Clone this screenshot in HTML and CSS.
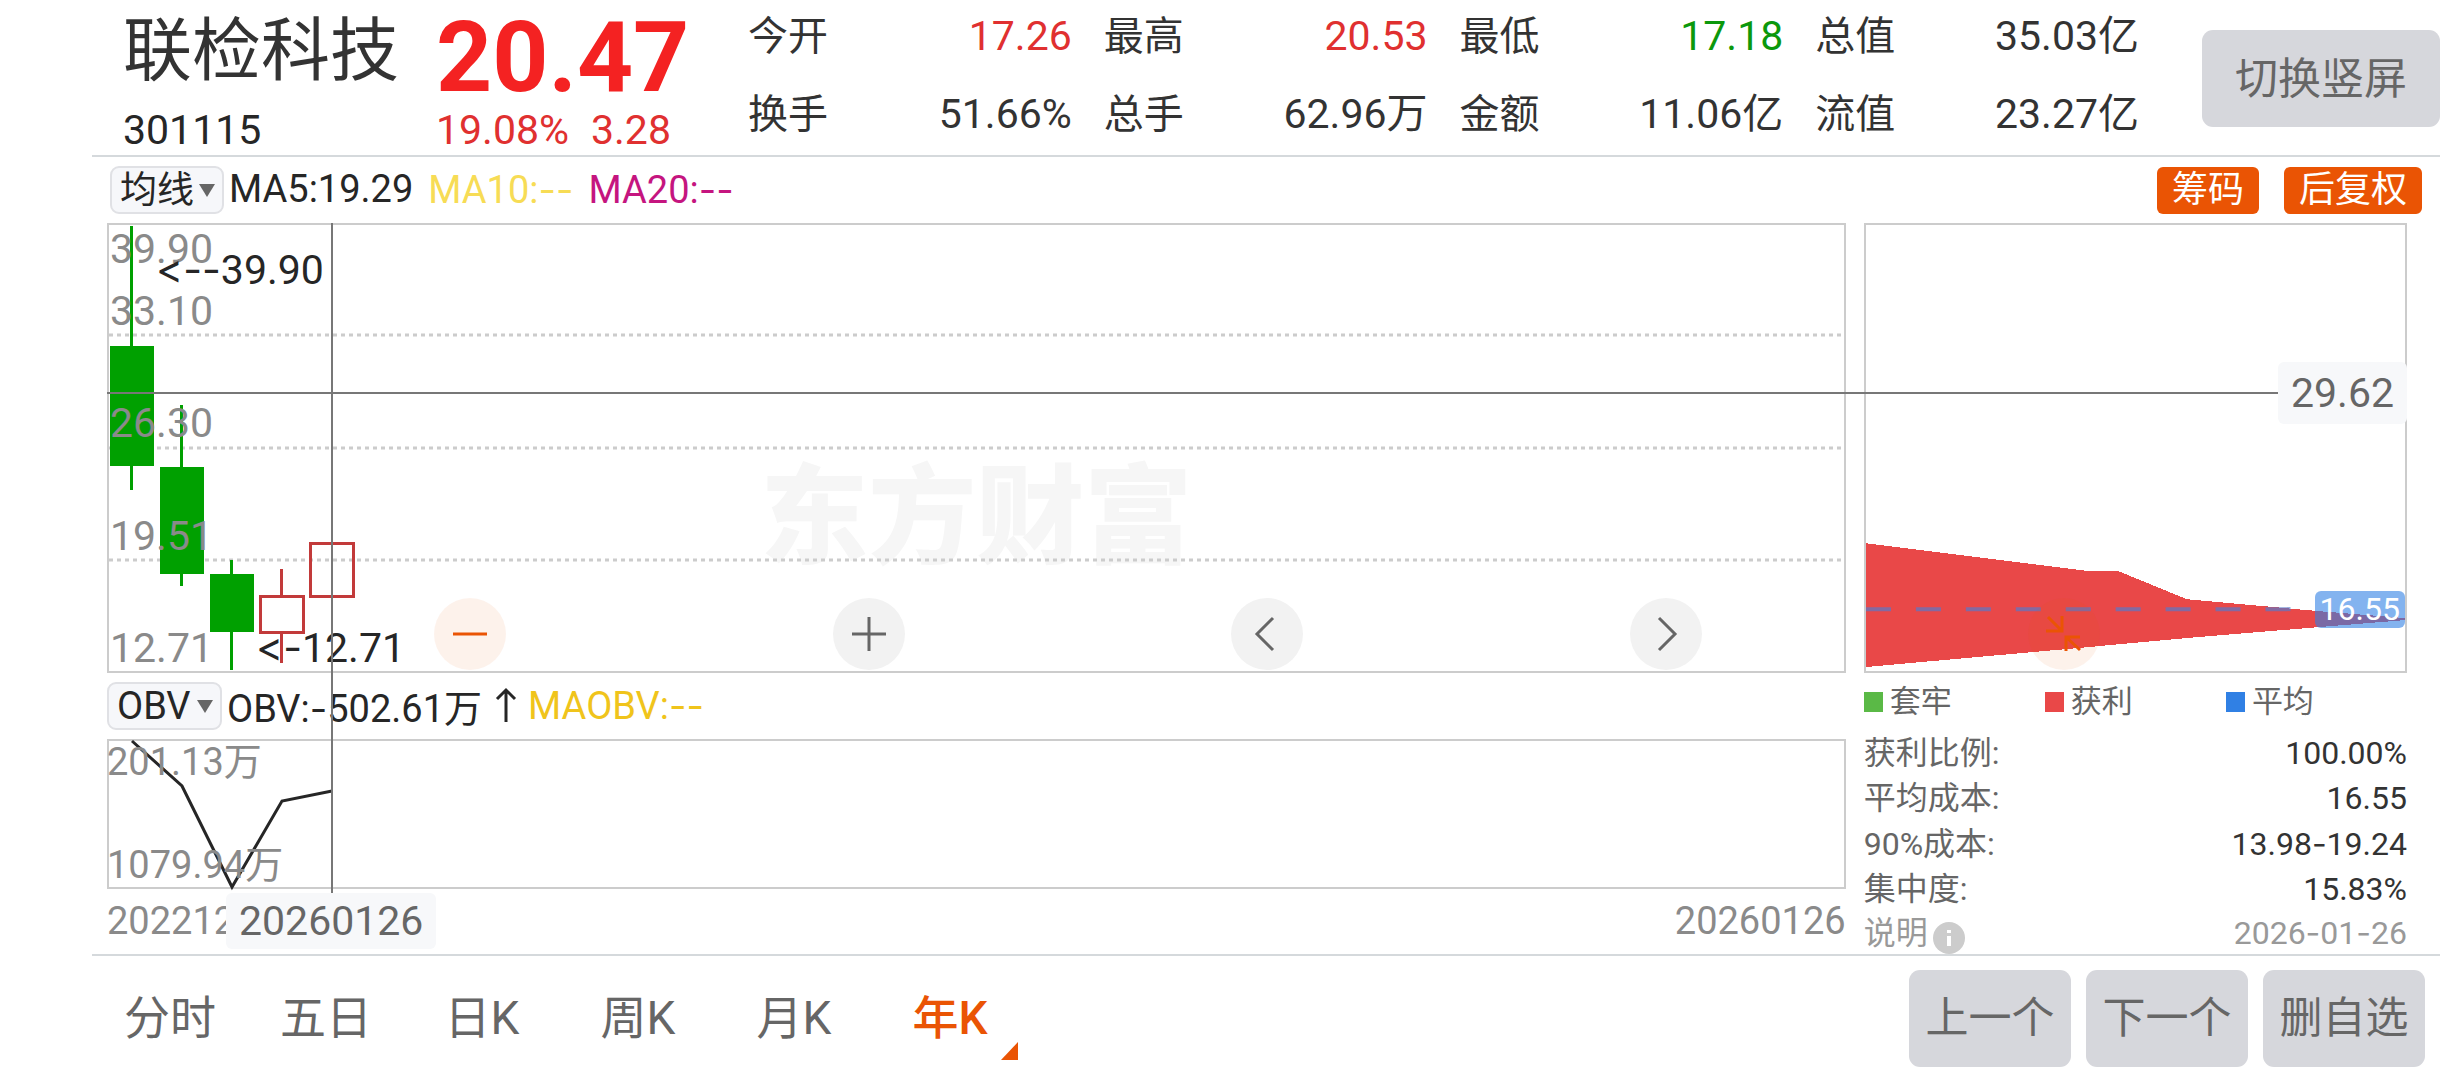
FILE: index.html
```html
<!DOCTYPE html>
<html lang="zh-CN">
<head>
  <meta charset="UTF-8">
  <title>联检科技 301115</title>
  <link rel="stylesheet" href="styles.css">
</head>
<body>
  <header class="quote">
    <div class="stock">
      <h1>联检科技</h1>
      <span class="code">301115</span>
    </div>
    <div class="price">
      <strong>20.47</strong>
      <div class="change"><span>19.08%</span><span>3.28</span></div>
    </div>
    <dl class="stats">
      <div><dt>今开</dt><dd class="up">17.26</dd></div>
      <div><dt>最高</dt><dd class="up">20.53</dd></div>
      <div><dt>最低</dt><dd class="down">17.18</dd></div>
      <div><dt>总值</dt><dd>35.03亿</dd></div>
      <div><dt>换手</dt><dd>51.66%</dd></div>
      <div><dt>总手</dt><dd>62.96万</dd></div>
      <div><dt>金额</dt><dd>11.06亿</dd></div>
      <div><dt>流值</dt><dd>23.27亿</dd></div>
    </dl>
    <button class="gray-btn rotate-btn">切换竖屏</button>
  </header>

  <div class="toolbar">
    <div class="picker">
      <select aria-label="主图指标"><option>均线</option></select>
    </div>
    <div class="values">
      <span>MA5:19.29</span>
      <span class="ma10">MA10:<i>--</i></span>
      <span class="ma20">MA20:<i>--</i></span>
    </div>
    <button class="tag-btn">筹码</button>
    <button class="tag-btn">后复权</button>
  </div>

  <main class="charts">
    <section class="left">
      <div class="box kline">
        <svg width="100%" height="100%">
          <text class="watermark" x="50%" y="330">东方财富</text>
          <g class="grid">
            <line x1="0" y1="110" x2="100%" y2="110"/>
            <line x1="0" y1="223" x2="100%" y2="223"/>
            <line x1="0" y1="335" x2="100%" y2="335"/>
          </g>
          <g class="fall">
            <rect x="21" y="1" width="3" height="264"/>
            <rect x="1" y="121" width="44" height="120"/>
            <rect x="71" y="180" width="3" height="181"/>
            <rect x="51" y="242" width="44" height="107"/>
            <rect x="121" y="335" width="3" height="110"/>
            <rect x="101" y="349" width="44" height="58"/>
          </g>
          <g class="rise">
            <path d="M172.500 344V371M172.500 408V438"/>
            <rect x="151.500" y="371.500" width="43" height="36"/>
            <rect x="201.500" y="318.500" width="43" height="53"/>
          </g>
          <g class="axis">
            <text x="1" y="38">39.90</text>
            <text x="1" y="100">33.10</text>
            <text x="1" y="212">26.30</text>
            <text x="1" y="325">19.51</text>
            <text x="1" y="437">12.71</text>
          </g>
          <text class="mark" x="47" y="59"><tspan class="dash">&lt;--</tspan>39.90</text>
          <text class="mark" x="147" y="437"><tspan class="dash">&lt;-</tspan>12.71</text>
        </svg>
      </div>
      <div class="toolbar obv-bar">
        <div class="picker">
          <select aria-label="副图指标"><option>OBV</option></select>
        </div>
        <div class="values">
          <span>OBV:<i>-</i>502.61万</span>
          <svg class="arrow" width="46" height="38" viewBox="0 0 46 38"><path d="M24 36V4M15 13L24 4L33 13"/></svg>
          <span class="maobv">MAOBV:<i>--</i></span>
        </div>
      </div>
      <div class="box obv">
        <svg width="100%" height="100%">
          <polyline points="23,0 73,45 123,146 173,60 223,50"/>
          <g class="axis small">
            <text x="-2" y="34">201.13万</text>
            <text x="-2" y="137">1079.94万</text>
          </g>
        </svg>
      </div>
      <div class="dates"><span>20221230</span><span>20260126</span></div>
      <div class="cross-v"></div>
      <div class="cross-date">20260126</div>
    </section>

    <section class="right">
      <div class="box chips">
        <svg width="100%" height="100%" viewBox="0 0 540 447" preserveAspectRatio="none">
          <polygon points="0,319 224,347 253,347 321,375 453,387 540,394 540,396 453,403 321,414 212,424 67,437 0,443"/>
          <line x1="0" y1="385" x2="440" y2="385"/>
        </svg>
        <span class="avg">16.55</span>
      </div>
      <ul class="legend">
        <li class="green">套牢</li>
        <li class="red">获利</li>
        <li class="blue">平均</li>
      </ul>
      <table class="cost">
        <tr><th>获利比例:</th><td>100.00%</td></tr>
        <tr><th>平均成本:</th><td>16.55</td></tr>
        <tr><th>90%成本:</th><td>13.98<i>-</i>19.24</td></tr>
        <tr><th>集中度:</th><td>15.83%</td></tr>
        <tr class="note">
          <th>说明<svg width="32" height="32" viewBox="0 0 32 32"><circle cx="16" cy="16" r="16"/><path d="M16 14V24M16 8V11"/></svg></th>
          <td>2026<i>-</i>01<i>-</i>26</td>
        </tr>
      </table>
    </section>

    <div class="cross-h"></div>
    <div class="cross-price">29.62</div>

    <div class="controls">
      <button class="orange" aria-label="缩小"><svg viewBox="0 0 72 72"><path d="M19 36H53"/></svg></button>
      <button aria-label="放大"><svg viewBox="0 0 72 72"><path d="M19 36H53M36 19V53"/></svg></button>
      <button aria-label="左移"><svg viewBox="0 0 72 72"><path d="M42 20L26 36L42 52"/></svg></button>
      <button aria-label="右移"><svg viewBox="0 0 72 72"><path d="M29 20L45 36L29 52"/></svg></button>
      <button class="orange" aria-label="收起"><svg viewBox="0 0 72 72"><path d="M34 18V33H18M20 19L34 33M52 39H38V53M38 39L52 52"/></svg></button>
    </div>
  </main>

  <footer class="bottom">
    <nav class="tabs">
      <button>分时</button>
      <button>五日</button>
      <button>日K</button>
      <button>周K</button>
      <button>月K</button>
      <button class="active">年K</button>
    </nav>
    <button class="gray-btn">上一个</button>
    <button class="gray-btn">下一个</button>
    <button class="gray-btn">删自选</button>
  </footer>
</body>
</html>
```

FILE: styles.css
```css
* {
  box-sizing: border-box;
}

body {
  margin: 0;
  padding-left: 92px;
  background: #fff;
  color: #333;
  font-family: Roboto, "Noto Sans CJK SC", sans-serif;
  font-size: 41px;
}

button, select {
  margin: 0;
  padding: 0;
  border: 0;
  font-family: inherit;
  color: inherit;
  cursor: pointer;
}

h1, dl, dd, ul {
  margin: 0;
  padding: 0;
}

svg {
  display: block;
}

/* wide hyphens, no arrow ligatures */
i, .dash {
  font-family: Inter, sans-serif;
  font-style: normal;
  font-variant-ligatures: none;
  font-feature-settings: "calt" 0;
}

/* header */
.quote {
  display: flex;
  height: 157px;
  border-bottom: 2px solid #d5d9dc;
}

.stock {
  width: 344px;
  padding: 10px 0 0 31px;
}

.stock h1 {
  font-size: 69px;
  font-weight: 400;
  line-height: 84px;
}

.code {
  display: block;
  color: #262626;
  line-height: 72px;
}

.price {
  width: 312px;
}

.price strong {
  display: block;
  padding-top: 8px;
  color: #f42222;
  font-size: 98px;
  line-height: 100px;
}

.change {
  display: flex;
  gap: 22px;
  color: #e03030;
  line-height: 44px;
}

.stats {
  flex: 1;
  display: grid;
  grid-template-columns: repeat(4, 1fr);
  column-gap: 32px;
  align-content: start;
}

.stats div {
  display: flex;
  justify-content: space-between;
  height: 78px;
  line-height: 73px;
}

.stats dt {
  font-size: 40px;
}

.up {
  color: #e03030;
}

.down {
  color: #0c980c;
}

.gray-btn {
  height: 97px;
  width: 162px;
  padding-bottom: 8px;
  border-radius: 11px;
  background: #d6d7dc;
  color: #666;
  font-size: 43px;
}

.rotate-btn {
  width: 238px;
  margin: 30px 0 0 63px;
}

/* indicator bars */
.toolbar {
  display: flex;
  align-items: center;
  height: 66px;
  padding: 0 18px;
  font-size: 38px;
}

.picker {
  position: relative;
  width: 114px;
}

.picker select {
  width: 100%;
  height: 48px;
  padding-left: 8px;
  border: 2px solid #e0e1e5;
  border-radius: 9px;
  background: #f6f7fa;
  color: #262626;
  font-size: 37px;
  appearance: none;
}

.picker::after {
  content: "";
  position: absolute;
  right: 9px;
  top: 18px;
  border: 8px solid transparent;
  border-top: 13px solid #666;
  border-bottom: 0;
  pointer-events: none;
}

.values {
  flex: 1;
  display: flex;
  align-items: center;
  gap: 15px;
  padding: 0 0 2px 5px;
  color: #262626;
  white-space: nowrap;
}

.ma10 {
  color: #f7dc55;
}

.ma20 {
  color: #c5157f;
}

.maobv {
  color: #f0c41b;
}

.tag-btn {
  height: 47px;
  margin-left: 25px;
  padding: 0 15px;
  border-radius: 6px;
  background: #ea5404;
  color: #fff;
  font-size: 36px;
  line-height: 47px;
}

/* charts */
.charts {
  position: relative;
  display: grid;
  grid-template-columns: 16fr 5fr;
  column-gap: 18px;
  padding: 0 33px 0 15px;
}

.left {
  position: relative;
}

.box {
  border: 2px solid #ccc;
}

.kline, .chips {
  height: 450px;
}

.grid line {
  stroke: #ccc;
  stroke-width: 3;
  stroke-dasharray: 4 4;
}

.watermark {
  fill: #f6f6f6;
  font-size: 108px;
  font-weight: 900;
  text-anchor: middle;
}

.fall {
  fill: #00a000;
}

.rise {
  fill: none;
  stroke: #c23a3a;
  stroke-width: 3;
}

.axis {
  fill: #8a8a8a;
}

.axis.small {
  font-size: 38px;
}

.mark {
  fill: #262626;
}

.obv-bar {
  height: 66px;
  padding: 0;
}

.obv-bar .picker {
  width: 115px;
}

.obv-bar select {
  font-size: 38px;
}

.obv-bar .values {
  gap: 0;
}

.arrow {
  fill: none;
  stroke: #262626;
  stroke-width: 3;
}

.obv {
  height: 150px;
}

.obv svg {
  overflow: visible;
}

.obv polyline {
  fill: none;
  stroke: #262626;
  stroke-width: 3;
}

.dates {
  display: flex;
  justify-content: space-between;
  color: #8a8a8a;
  font-size: 38px;
  line-height: 64px;
}

.cross-v {
  position: absolute;
  left: 224px;
  top: 0;
  width: 2px;
  height: 670px;
  background: #777;
}

.cross-h {
  position: absolute;
  left: 15px;
  right: 162px;
  top: 169px;
  height: 2px;
  background: #777;
}

.cross-date, .cross-price {
  position: absolute;
  border-radius: 6px;
  background: #f7f8fa;
  color: #666;
}

.cross-date {
  left: 119px;
  top: 670px;
  padding: 0 13px;
  line-height: 56px;
}

.cross-price {
  right: 33px;
  top: 139px;
  padding: 0 13px;
  line-height: 62px;
}

/* zoom and pan buttons over the charts */
.controls {
  position: absolute;
  left: 342px;
  right: 340px;
  top: 375px;
  display: flex;
  justify-content: space-between;
}

.controls button {
  width: 72px;
  height: 72px;
  border-radius: 50%;
  background: #f2f2f2;
  color: #666;
}

.controls .orange {
  background: rgba(234, 84, 4, 0.08);
  color: #ea5404;
}

.controls path {
  fill: none;
  stroke: currentColor;
  stroke-width: 3;
}

/* cost distribution */
.chips {
  position: relative;
}

.chips polygon {
  fill: #e94848;
  shape-rendering: crispEdges;
}

.chips line {
  stroke: rgba(88, 120, 200, 0.7);
  stroke-width: 4;
  stroke-dasharray: 25 25;
}

.avg {
  position: absolute;
  right: 0;
  top: 366px;
  padding: 0 5px;
  border-radius: 6px;
  background: rgba(48, 128, 228, 0.6);
  color: #fff;
  font-size: 32px;
  line-height: 37px;
}

.legend {
  display: grid;
  grid-template-columns: repeat(3, 1fr);
  list-style: none;
  color: #666;
  font-size: 31px;
  line-height: 58px;
}

.legend li {
  display: flex;
  align-items: center;
  gap: 7px;
}

.legend li::before {
  content: "";
  width: 19px;
  height: 20px;
  background: #5ab946;
}

.legend .red::before {
  background: #e94848;
}

.legend .blue::before {
  background: #3080e4;
}

.cost {
  width: 100%;
  border-collapse: collapse;
  font-size: 32px;
  line-height: 45px;
}

.cost th {
  padding: 0;
  color: #666;
  font-weight: 400;
  text-align: left;
}

.cost td {
  padding: 0;
  text-align: right;
}

.cost .note th, .cost .note td {
  color: #999;
  line-height: 42px;
}

.note svg {
  display: inline-block;
  margin: -4px 0 -4px 5px;
  vertical-align: -6px;
  fill: #ccc;
}

.note path {
  stroke: #fff;
  stroke-width: 4;
}

/* footer */
.bottom {
  display: flex;
  align-items: center;
  gap: 15px;
  height: 126px;
  padding-right: 15px;
  border-top: 2px solid #d5d9dc;
}

.tabs {
  flex: 1;
  display: flex;
}

.tabs button {
  position: relative;
  width: 156px;
  height: 90px;
  padding-bottom: 8px;
  background: none;
  color: #666;
  font-size: 46px;
}

.tabs .active {
  color: #ea5404;
  font-weight: 500;
}

.tabs .active::after {
  content: "";
  position: absolute;
  right: 10px;
  bottom: 3px;
  border-left: 17px solid transparent;
  border-bottom: 18px solid #ea5404;
}
```
